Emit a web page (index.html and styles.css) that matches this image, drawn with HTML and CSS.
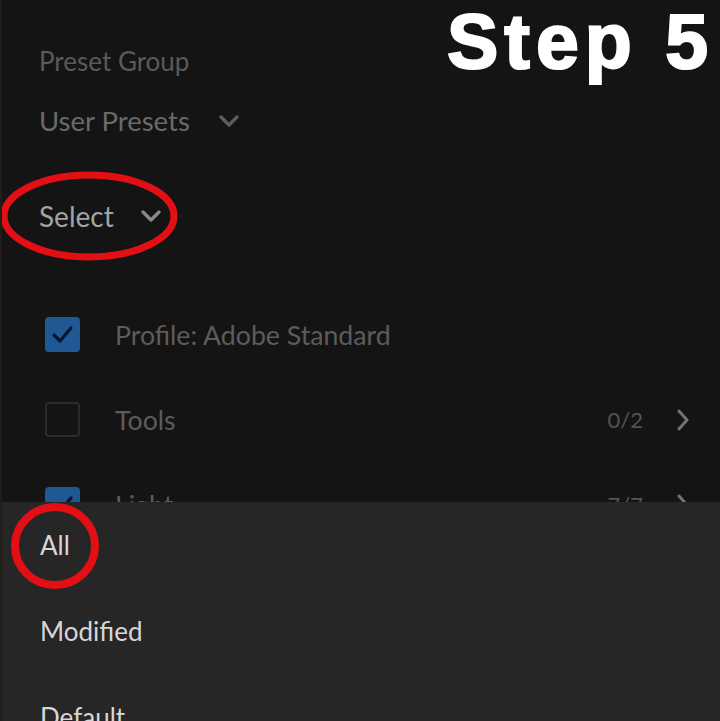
FILE: index.html
```html
<!DOCTYPE html>
<html>
<head>
<meta charset="utf-8">
<link rel="stylesheet" href="styles.css">
</head>
<body>
<div class="screen">
  <div class="panel">
    <div class="label">Preset Group</div>
    <div class="dropdown group">
      <span>User Presets</span>
      <svg class="chev-down" viewBox="0 0 20 12"><path d="M2 2 L10 10 L18 2"/></svg>
    </div>
    <div class="dropdown select">
      <span>Select</span>
      <svg class="chev-down" viewBox="0 0 20 12"><path d="M2 2 L10 10 L18 2"/></svg>
    </div>
    <div class="rows">
      <div class="row">
        <span class="box checked"><svg viewBox="0 0 35 35"><path d="M9 18 L15 24 L26 11"/></svg></span>
        <span class="name">Profile: Adobe Standard</span>
      </div>
      <div class="row">
        <span class="box"></span>
        <span class="name">Tools</span>
        <span class="count">0/2</span>
        <svg class="chev-right" viewBox="0 0 14 22"><path d="M3 2 L11 11 L3 20"/></svg>
      </div>
      <div class="row">
        <span class="box checked"><svg viewBox="0 0 35 35"><path d="M9 18 L15 24 L26 11"/></svg></span>
        <span class="name">Light</span>
        <span class="count">7/7</span>
        <svg class="chev-right" viewBox="0 0 14 22"><path d="M3 2 L11 11 L3 20"/></svg>
      </div>
    </div>
  </div>

  <div class="sheet">
    <div class="option">All</div>
    <div class="option">Modified</div>
    <div class="option">Default</div>
  </div>

  <div class="step">Step 5</div>

  <svg class="mark mark-select" viewBox="0 0 180 92"><ellipse cx="89" cy="45" rx="85" ry="41"/></svg>
  <svg class="mark mark-all" viewBox="0 0 92 90"><ellipse cx="45" cy="44" rx="40" ry="39"/></svg>
</div>
</body>
</html>
```

FILE: styles.css
```css
html, body {
  margin: 0;
  padding: 0;
  background: #141414;
}

.screen {
  position: relative;
  width: 720px;
  height: 721px;
  overflow: hidden;
  background: #141414;
  border-left: 2px solid #221e16;
  box-sizing: border-box;
  font-family: Lato, "Open Sans", "Liberation Sans", sans-serif;
}

.panel {
  display: flex;
  flex-direction: column;
  padding: 41px 0 0 37px;
}

.label {
  font-size: 26px;
  line-height: 40px;
  height: 40px;
  color: #5a5a5a;
}

.dropdown {
  display: flex;
  align-items: center;
  height: 40px;
  line-height: 40px;
}

.group {
  margin-top: 20px;
  font-size: 27.5px;
  color: #6a6a6a;
  gap: 29px;
}

.group .chev-down {
  stroke: #5e5e5e;
}

.select {
  margin-top: 55px;
  font-size: 28px;
  color: #a3a3a3;
  gap: 27px;
}

.select .chev-down {
  stroke: #8a8a8a;
}

.chev-down {
  width: 20px;
  height: 12px;
  fill: none;
  stroke-width: 3.2;
  stroke-linecap: round;
  stroke-linejoin: round;
}

.rows {
  display: flex;
  flex-direction: column;
  margin-top: 56px;
}

.row {
  display: flex;
  align-items: center;
  height: 85px;
  padding-left: 6px;
  padding-right: 30px;
}

.box {
  width: 35px;
  height: 35px;
  box-sizing: border-box;
  border: 2px solid #2b2b2b;
  border-radius: 4px;
  flex: none;
}

.box.checked {
  background: #1f5894;
  border-color: #1f5894;
}

.box svg {
  display: block;
  width: 35px;
  height: 35px;
  margin: -2px;
  fill: none;
  stroke: #0d1626;
  stroke-width: 3.2;
  stroke-linecap: round;
  stroke-linejoin: round;
}

.name {
  margin-left: 35px;
  font-size: 26.7px;
  color: #5c5c5c;
  flex: 1;
}

.count {
  font-size: 22px;
  color: #545454;
  margin-right: 33px;
}

.chev-right {
  width: 14px;
  height: 22px;
  fill: none;
  stroke: #737373;
  stroke-width: 3;
  stroke-linecap: round;
  stroke-linejoin: round;
}

.sheet {
  position: absolute;
  left: 0;
  right: 0;
  top: 502px;
  bottom: 0;
  background: #262626;
  display: flex;
  flex-direction: column;
  padding-left: 38px;
}

.option {
  height: 86px;
  line-height: 86px;
  font-size: 26px;
  color: #d6d6d6;
  flex: none;
}

.step {
  position: absolute;
  top: 3px;
  right: 6px;
  font-family: "Liberation Sans", Arial, sans-serif;
  font-weight: bold;
  font-size: 77px;
  line-height: 77px;
  letter-spacing: 6px;
  color: #ffffff;
  -webkit-text-stroke: 2.2px #ffffff;
}

.mark {
  position: absolute;
  fill: none;
  stroke: #e20f14;
}

.mark ellipse {
  stroke-width: 7;
}

.mark-select {
  left: -2px;
  top: 171px;
  width: 180px;
  height: 92px;
}

.mark-all {
  left: 8px;
  top: 502px;
  width: 92px;
  height: 90px;
}

.mark-all ellipse {
  stroke-width: 8;
}
```
